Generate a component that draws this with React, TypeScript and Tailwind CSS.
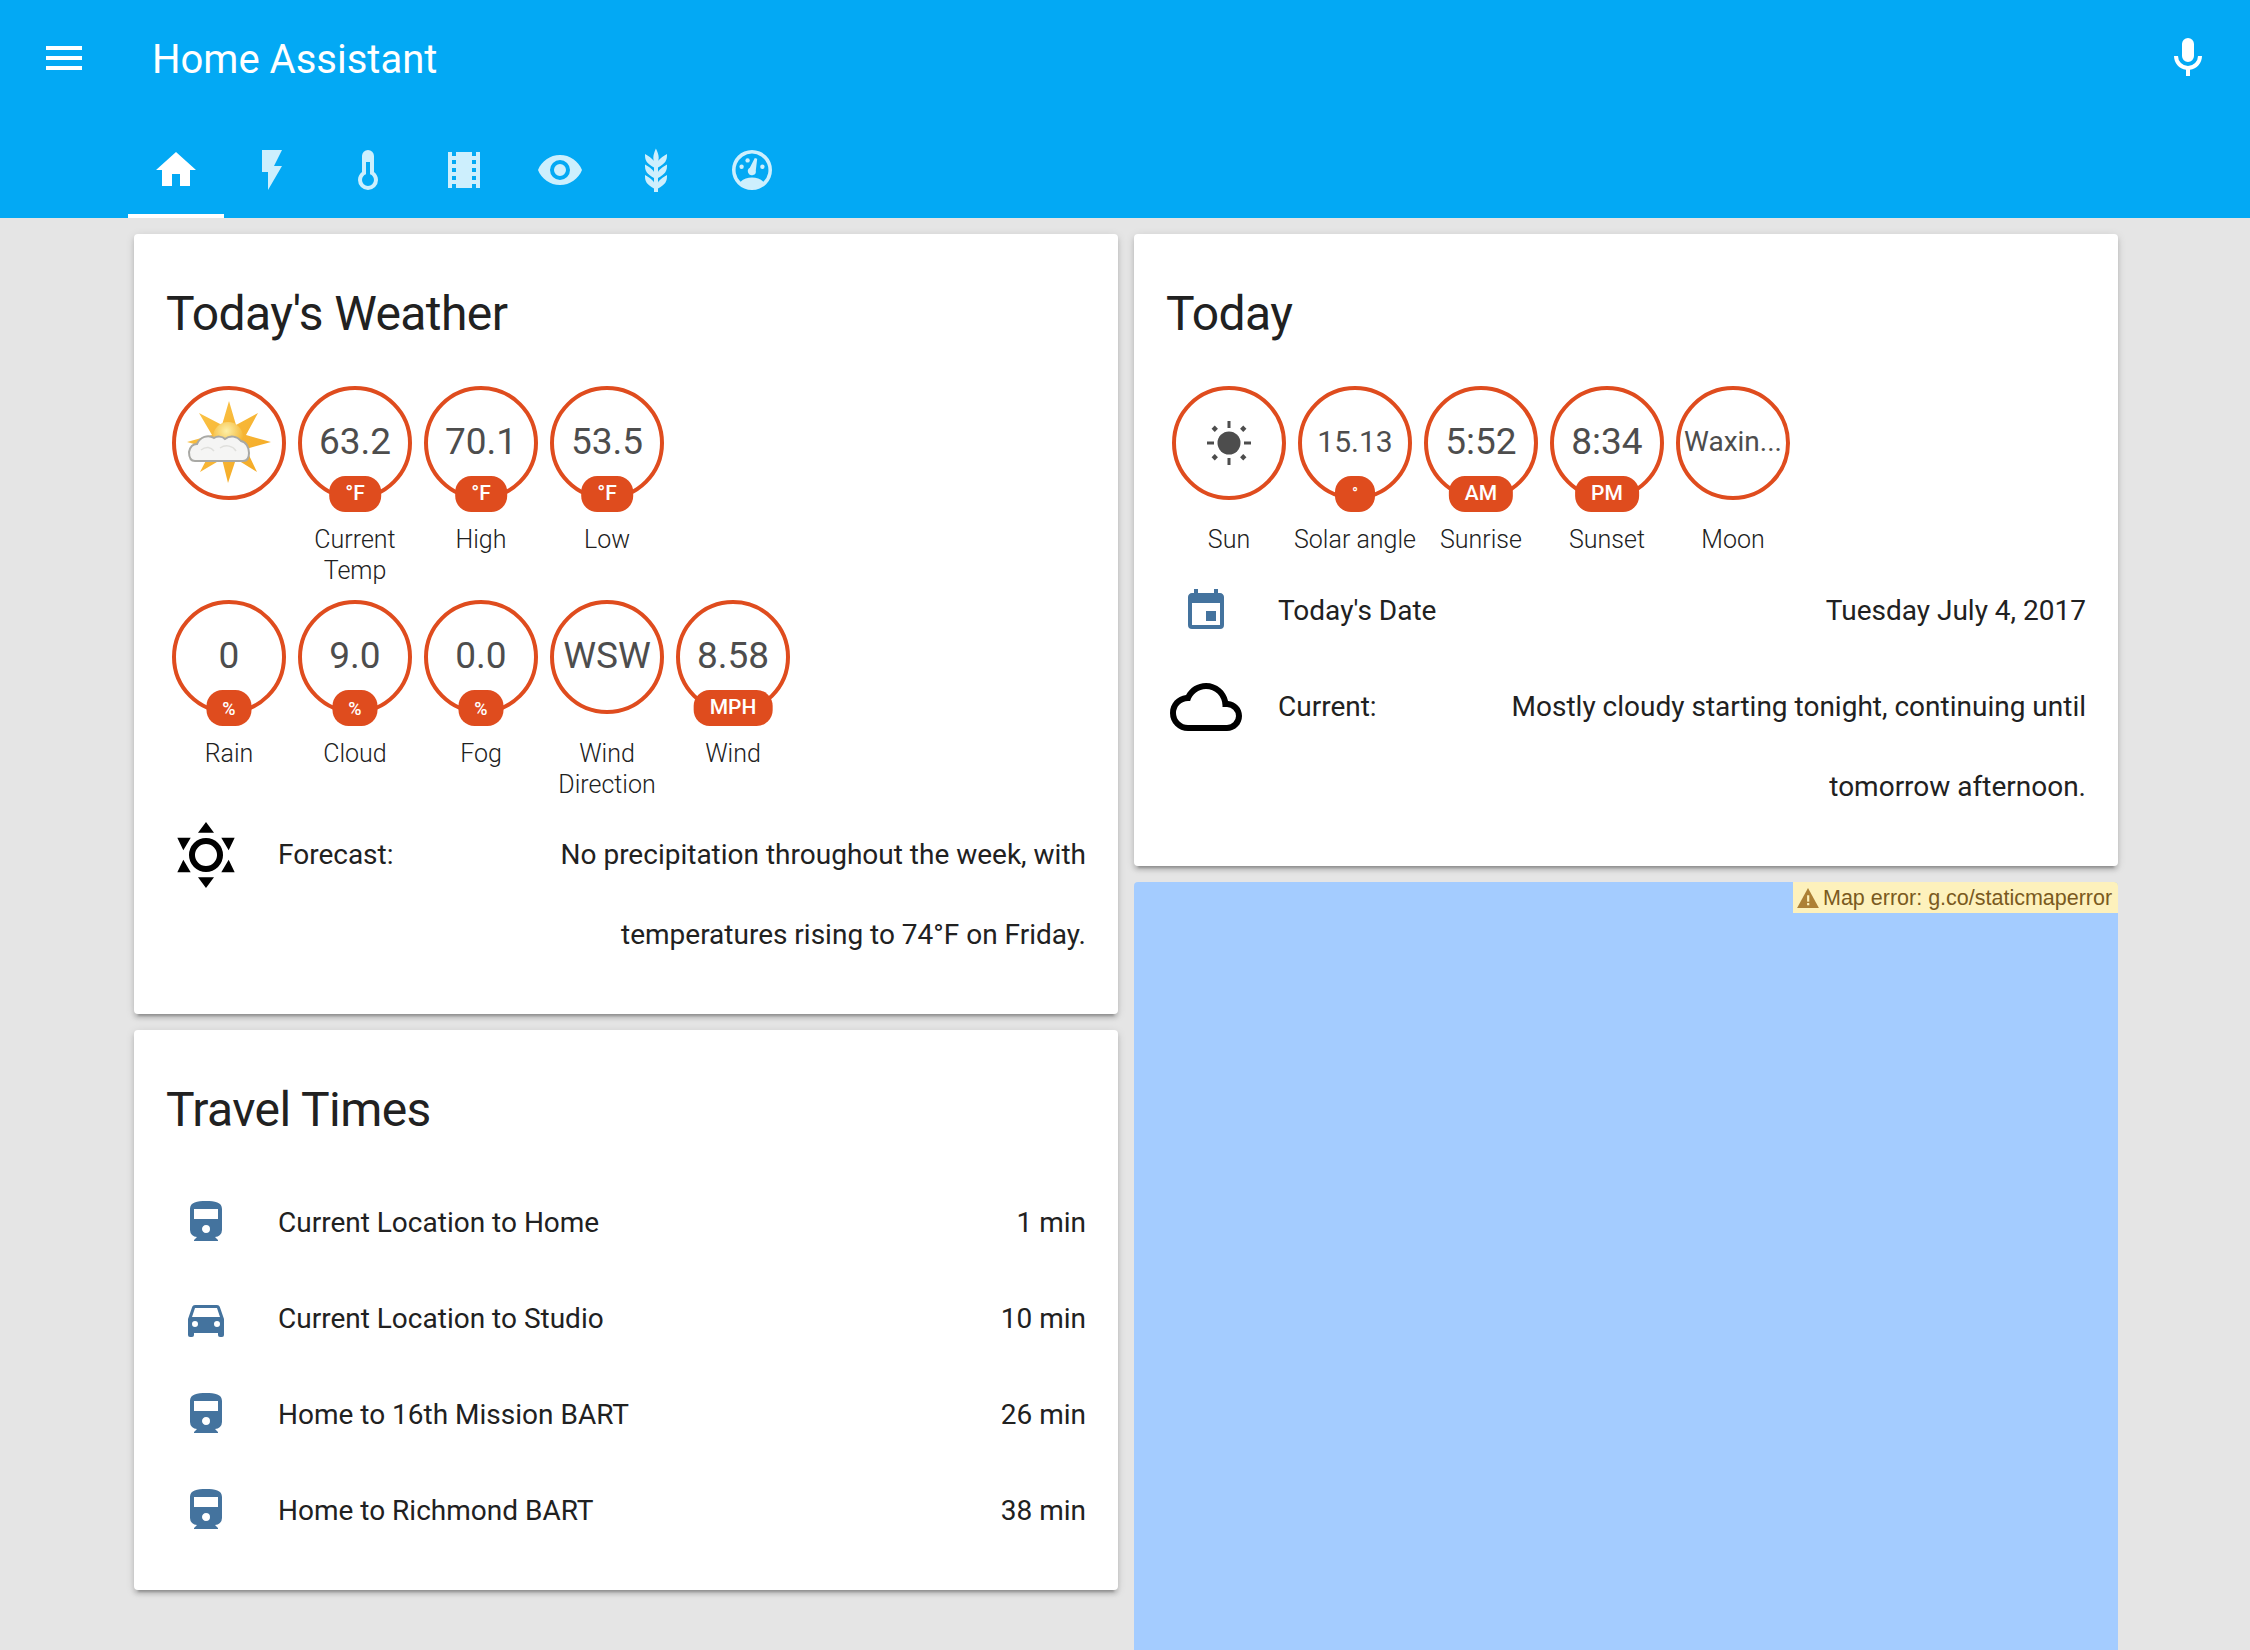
import type { ReactNode } from "react";

const paths = {
  menu: "M3,6H21V8H3V6M3,11H21V13H3V11M3,16H21V18H3V16Z",
  mic: "M12,2A3,3 0 0,1 15,5V11A3,3 0 0,1 12,14A3,3 0 0,1 9,11V5A3,3 0 0,1 12,2M19,11C19,14.53 16.39,17.44 13,17.93V21H11V17.93C7.61,17.44 5,14.53 5,11H7A5,5 0 0,0 12,16A5,5 0 0,0 17,11H19Z",
  home: "M10,20V14H14V20H19V12H22L12,3L2,12H5V20H10Z",
  flash: "M7,2V13H10V22L17,10H13L17,2H7Z",
  thermometer:
    "M17,17A5,5 0 0,1 12,22A5,5 0 0,1 7,17C7,15.36 7.79,13.91 9,13V5A3,3 0 0,1 12,2A3,3 0 0,1 15,5V13C16.21,13.91 17,15.36 17,17M11,8V14.17C9.83,14.58 9,15.69 9,17A3,3 0 0,0 12,20A3,3 0 0,0 15,17C15,15.69 14.17,14.58 13,14.17V8H11Z",
  film: "M18,9H16V7H18M18,13H16V11H18M18,17H16V15H18M8,9H6V7H8M8,13H6V11H8M8,17H6V15H8M18,3V5H16V3H8V5H6V3H4V21H6V19H8V21H16V19H18V21H20V3H18Z",
  eye: "M12,9A3,3 0 0,0 9,12A3,3 0 0,0 12,15A3,3 0 0,0 15,12A3,3 0 0,0 12,9M12,17A5,5 0 0,1 7,12A5,5 0 0,1 12,7A5,5 0 0,1 17,12A5,5 0 0,1 12,17M12,4.5C7,4.5 2.73,7.61 1,12C2.73,16.39 7,19.5 12,19.5C17,19.5 21.27,16.39 23,12C21.27,7.61 17,4.5 12,4.5Z",
  barley:
    "M7.33,18.33C6.5,17.17 6.5,15.83 6.5,14.5C8.17,15.5 9.83,16.5 10.67,17.67L11,18.23V15.95C9.5,15.05 8.08,14.13 7.33,13.08C6.5,11.92 6.5,10.58 6.5,9.25C8.17,10.25 9.83,11.25 10.67,12.42L11,13V10.7C9.5,9.8 8.08,8.88 7.33,7.83C6.5,6.67 6.5,5.33 6.5,4C8.17,5 9.83,6 10.67,7.17C10.77,7.31 10.86,7.46 10.94,7.62C10.77,7 10.66,6.42 10.65,5.82C10.64,4.31 11.3,2.76 11.96,1.21C12.65,2.69 13.34,4.18 13.35,5.69C13.36,6.32 13.25,6.96 13.07,7.59C13.15,7.45 13.23,7.31 13.33,7.17C14.17,6 15.83,5 17.5,4C17.5,5.33 17.5,6.67 16.67,7.83C15.92,8.88 14.5,9.8 13,10.7V13L13.33,12.42C14.17,11.25 15.83,10.25 17.5,9.25C17.5,10.58 17.5,11.92 16.67,13.08C15.92,14.13 14.5,15.05 13,15.95V18.23L13.33,17.67C14.17,16.5 15.83,15.5 17.5,14.5C17.5,15.83 17.5,17.17 16.67,18.33C15.92,19.38 14.5,20.3 13,21.2V23H11V21.2C9.5,20.3 8.08,19.38 7.33,18.33Z",
  train:
    "M18,10H6V5H18M12,17C10.89,17 10,16.1 10,15C10,13.89 10.89,13 12,13A2,2 0 0,1 14,15A2,2 0 0,1 12,17M4,15.5A3.5,3.5 0 0,0 7.5,19L6,20.5V21H18V20.5L16.5,19A3.5,3.5 0 0,0 20,15.5V5C20,1.5 16.42,1 12,1C7.58,1 4,1.5 4,5V15.5Z",
  car: "M5,11L6.5,6.5H17.5L19,11M17.5,16A1.5,1.5 0 0,1 16,14.5A1.5,1.5 0 0,1 17.5,13A1.5,1.5 0 0,1 19,14.5A1.5,1.5 0 0,1 17.5,16M6.5,16A1.5,1.5 0 0,1 5,14.5A1.5,1.5 0 0,1 6.5,13A1.5,1.5 0 0,1 8,14.5A1.5,1.5 0 0,1 6.5,16M18.92,6C18.72,5.42 18.16,5 17.5,5H6.5C5.84,5 5.28,5.42 5.08,6L3,12V20A1,1 0 0,0 4,21H5A1,1 0 0,0 6,20V19H18V20A1,1 0 0,0 19,21H20A1,1 0 0,0 21,20V12L18.92,6Z",
  calendar:
    "M19,19H5V8H19M16,1V3H8V1H6V3H5C3.89,3 3,3.89 3,5V19A2,2 0 0,0 5,21H19A2,2 0 0,0 21,19V5C21,3.89 20.1,3 19,3H18V1M17,12H12V17H17V12Z",
  cloud:
    "M19,18H6A4,4 0 0,1 2,14A4,4 0 0,1 6,10H6.71C7.37,7.69 9.5,6 12,6A5.5,5.5 0 0,1 17.5,11.5V12H19A3,3 0 0,1 22,15A3,3 0 0,1 19,18M19.35,10.03C18.67,6.59 15.64,4 12,4C9.11,4 6.6,5.64 5.35,8.03C2.34,8.36 0,10.9 0,14A6,6 0 0,0 6,20H19C21.76,20 24,17.76 24,15C24,12.36 21.95,10.22 19.35,10.03Z",
  sixSun:
    "M12,6.33A5.67,5.67 0 1,0 12,17.67A5.67,5.67 0 1,0 12,6.33M12,8.33A3.67,3.67 0 1,1 12,15.67A3.67,3.67 0 1,1 12,8.33M12,1L9.33,4.56H14.67ZM12,23L9.33,19.44H14.67ZM2.44,6.22H6.9L4.44,10.44ZM21.56,6.22H17.1L19.56,10.44ZM2.44,17.78H6.9L4.44,13.56ZM21.56,17.78H17.1L19.56,13.56Z",
};

function Mdi({ d, size = 48, className }: { d: string; size?: number; className?: string }) {
  return (
    <svg viewBox="0 0 24 24" width={size} height={size} className={className} fill="currentColor">
      <path d={d} />
    </svg>
  );
}

function GaugeIcon() {
  return (
    <svg viewBox="0 0 24 24" width={48} height={48} fill="currentColor">
      <path d="M12,2A10,10 0 0,1 12,22A10,10 0 0,1 12,2M12,3.8A8.2,8.2 0 0,0 6.3,17.9C7.8,16.4 9.8,15.8 12,15.8C14.2,15.8 16.2,16.4 17.7,17.9A8.2,8.2 0 0,0 12,3.8Z" />
      <path d="M13.4,6L14.6,6.4L13.9,12.2A2,2 0 1,1 10.9,10.9Z" />
      <circle cx="9.8" cy="7.2" r="1.1" />
      <circle cx="6.8" cy="10.4" r="1.1" />
      <circle cx="17.2" cy="10.4" r="1.1" />
    </svg>
  );
}

function SunBadgeIcon() {
  return (
    <svg viewBox="0 0 44 44" width={44} height={44} fill="#4d4d4d">
      <circle cx="22" cy="22" r="11.5" />
      <rect x="20.5" y="0" width="3" height="7" />
      <rect x="20.5" y="37" width="3" height="7" />
      <rect x="0" y="20.5" width="7" height="3" />
      <rect x="37" y="20.5" width="7" height="3" />
      <rect x="5.5" y="5.5" width="4.5" height="4.5" transform="rotate(45 7.75 7.75)" />
      <rect x="34" y="5.5" width="4.5" height="4.5" transform="rotate(45 36.25 7.75)" />
      <rect x="5.5" y="34" width="4.5" height="4.5" transform="rotate(45 7.75 36.25)" />
      <rect x="34" y="34" width="4.5" height="4.5" transform="rotate(45 36.25 36.25)" />
    </svg>
  );
}

function PartlyCloudy() {
  return (
    <svg viewBox="0 0 84 84" width={84} height={84}>
      <defs>
        <linearGradient id="ray" x1="0" y1="0" x2="1" y2="1">
          <stop offset="0" stopColor="#fbc64a" />
          <stop offset="1" stopColor="#f3a51f" />
        </linearGradient>
        <radialGradient id="disc" cx="0.45" cy="0.3" r="0.8">
          <stop offset="0" stopColor="#fdf0a8" />
          <stop offset="0.7" stopColor="#f5b93a" />
          <stop offset="1" stopColor="#e39a1c" />
        </radialGradient>
        <filter id="soft">
          <feGaussianBlur stdDeviation="0.7" />
        </filter>
      </defs>
      <g filter="url(#soft)">
        <polygon
          fill="url(#ray)"
          points="42,0 49,24 71,12 59,34 84,41 59,48 70,71 49,58 41,82 35,58 13,71 25,48 0,41 25,34 12,12 35,24"
        />
        <circle cx="41" cy="36" r="15" fill="url(#disc)" />
        <path
          d="M8,60C3,60 2,55 2,51C3,46 6,43 10,43C13,36 21,33 27,37C30,35 35,35 38,38C43,34 50,35 54,40C59,41 62,46 62,52C62,57 60,60 56,60Z"
          fill="#f5f5f4"
          stroke="#a9a9a5"
          strokeWidth="2"
        />
        <path d="M14,49C19,45 24,46 27,50M33,47C39,43 46,45 49,50" fill="none" stroke="#dfdfdc" strokeWidth="1.5" />
      </g>
    </svg>
  );
}

function Badge({
  value,
  valueClass = "text-[37px]",
  unit,
  pillClass = "px-4 text-[21px]",
  label,
  icon,
}: {
  value?: string;
  valueClass?: string;
  unit?: string;
  pillClass?: string;
  label: string;
  icon?: ReactNode;
}) {
  return (
    <div className="flex w-[126px] flex-col items-center">
      <div className="relative flex h-[114px] w-[114px] items-center justify-center rounded-full border-4 border-[#df4c1e] text-[#4d4d4d]">
        {icon ?? <span className={`whitespace-nowrap pb-[3px] leading-none ${valueClass}`}>{value}</span>}
        {unit && (
          <span
            className={`absolute left-1/2 top-[86px] flex h-9 -translate-x-1/2 items-center justify-center whitespace-nowrap rounded-2xl bg-[#df4c1e] font-medium text-white ${pillClass}`}
          >
            {unit}
          </span>
        )}
      </div>
      <div className="mt-6 w-[126px] text-center text-[25px] font-light leading-[31px] text-[#212121]">
        {label}
      </div>
    </div>
  );
}

function Row({ icon, name, value }: { icon: ReactNode; name: string; value: string }) {
  return (
    <div className="flex text-[28px] leading-[80px] text-[#212121]">
      <div className="flex h-20 w-20 shrink-0 items-center justify-center">{icon}</div>
      <div className="ml-8 flex-1 whitespace-nowrap">{name}</div>
      <div className="max-w-[600px] text-right">{value}</div>
    </div>
  );
}

function Card({ title, children }: { title: string; children: ReactNode }) {
  return (
    <div className="rounded bg-white px-8 pb-[39px] pt-12 shadow-[0_4px_4px_rgba(0,0,0,0.14),0_2px_10px_rgba(0,0,0,0.12),0_6px_2px_-4px_rgba(0,0,0,0.2)]">
      <h2 className="pb-8 text-[48px] leading-[64px] tracking-[-0.012em] text-[#212121]">{title}</h2>
      {children}
    </div>
  );
}

const tabIcons = [paths.flash, paths.thermometer, paths.film, paths.eye, paths.barley];
const pct = "w-[45px] text-[18px]";

const trips = [
  { icon: paths.train, name: "Current Location to Home", value: "1 min" },
  { icon: paths.car, name: "Current Location to Studio", value: "10 min" },
  { icon: paths.train, name: "Home to 16th Mission BART", value: "26 min" },
  { icon: paths.train, name: "Home to Richmond BART", value: "38 min" },
];

export default function App() {
  return (
    <div className="h-[1650px] overflow-hidden bg-[#e5e5e5] font-[Roboto,sans-serif]">
      <header className="h-[218px] bg-[#03a9f4] text-white">
        <div className="flex h-[116px] items-center">
          <Mdi d={paths.menu} className="ml-10" />
          <div className="ml-[64px] flex-1 pt-[3px] text-[40px]">Home Assistant</div>
          <Mdi d={paths.mic} className="mr-[38px]" />
        </div>
        <nav className="ml-[128px] mt-[6px] flex h-[96px] text-[#cdeffd]">
          <div className="flex w-24 items-center justify-center border-b-4 border-white pt-1 text-white">
            <Mdi d={paths.home} />
          </div>
          {tabIcons.map((d) => (
            <div key={d} className="flex w-24 items-center justify-center">
              <Mdi d={d} />
            </div>
          ))}
          <div className="flex w-24 items-center justify-center">
            <GaugeIcon />
          </div>
        </nav>
      </header>

      <main className="ml-[134px] flex w-[1984px] gap-4 pt-4">
        <div className="flex w-[984px] flex-col gap-4">
          <Card title="Today's Weather">
            <div className="pt-2">
              <div className="flex">
                <Badge label="" icon={<PartlyCloudy />} />
                <Badge value="63.2" unit="°F" label="Current Temp" />
                <Badge value="70.1" unit="°F" label="High" />
                <Badge value="53.5" unit="°F" label="Low" />
              </div>
              <div className="mt-[14px] flex">
                <Badge value="0" unit="%" pillClass={pct} label="Rain" />
                <Badge value="9.0" unit="%" pillClass={pct} label="Cloud" />
                <Badge value="0.0" unit="%" pillClass={pct} label="Fog" />
                <Badge value="WSW" label="Wind Direction" />
                <Badge value="8.58" unit="MPH" label="Wind" />
              </div>
              <div className="mt-[15px]">
                <Row
                  icon={<Mdi d={paths.sixSun} size={72} className="text-black" />}
                  name="Forecast:"
                  value="No precipitation throughout the week, with temperatures rising to 74°F on Friday."
                />
              </div>
            </div>
          </Card>
          <Card title="Travel Times">
            <div className="flex flex-col gap-4 pt-[9px]">
              {trips.map((t) => (
                <Row
                  key={t.name}
                  icon={<Mdi d={t.icon} className="text-[#44739e]" />}
                  name={t.name}
                  value={t.value}
                />
              ))}
            </div>
          </Card>
        </div>

        <div className="flex w-[984px] flex-col gap-4">
          <Card title="Today">
            <div className="pt-2">
              <div className="flex">
                <Badge label="Sun" icon={<SunBadgeIcon />} />
                <Badge value="15.13" valueClass="text-[30px]" unit="°" pillClass="w-10 text-[16px]" label="Solar angle" />
                <Badge value="5:52" unit="AM" label="Sunrise" />
                <Badge value="8:34" unit="PM" label="Sunset" />
                <Badge value="Waxin..." valueClass="text-[28px]" label="Moon" />
              </div>
              <div className="mt-4 flex flex-col gap-4">
                <Row
                  icon={<Mdi d={paths.calendar} className="text-[#44739e]" />}
                  name="Today's Date"
                  value="Tuesday July 4, 2017"
                />
                <Row
                  icon={<Mdi d={paths.cloud} size={72} className="text-black" />}
                  name="Current:"
                  value="Mostly cloudy starting tonight, continuing until tomorrow afternoon."
                />
              </div>
            </div>
          </Card>
          <div className="relative h-[900px] rounded-t bg-[#a4ccff]">
            <div className="absolute right-0 top-0 flex h-[31px] w-[325px] items-center gap-1 rounded-tr bg-[#fdf1bc] pl-[4px] pt-[1px] font-['Liberation_Sans',sans-serif] text-[21.5px] text-[#7a5a20]">
              <svg viewBox="0 0 24 22" width={22} height={20} fill="#ad8035">
                <path d="M12,0L24,22H0Z" />
                <rect x="11" y="8" width="2.4" height="7" fill="#fdf1bc" />
                <rect x="11" y="16.5" width="2.4" height="2.5" fill="#fdf1bc" />
              </svg>
              Map error: g.co/staticmaperror
            </div>
          </div>
        </div>
      </main>
    </div>
  );
}
